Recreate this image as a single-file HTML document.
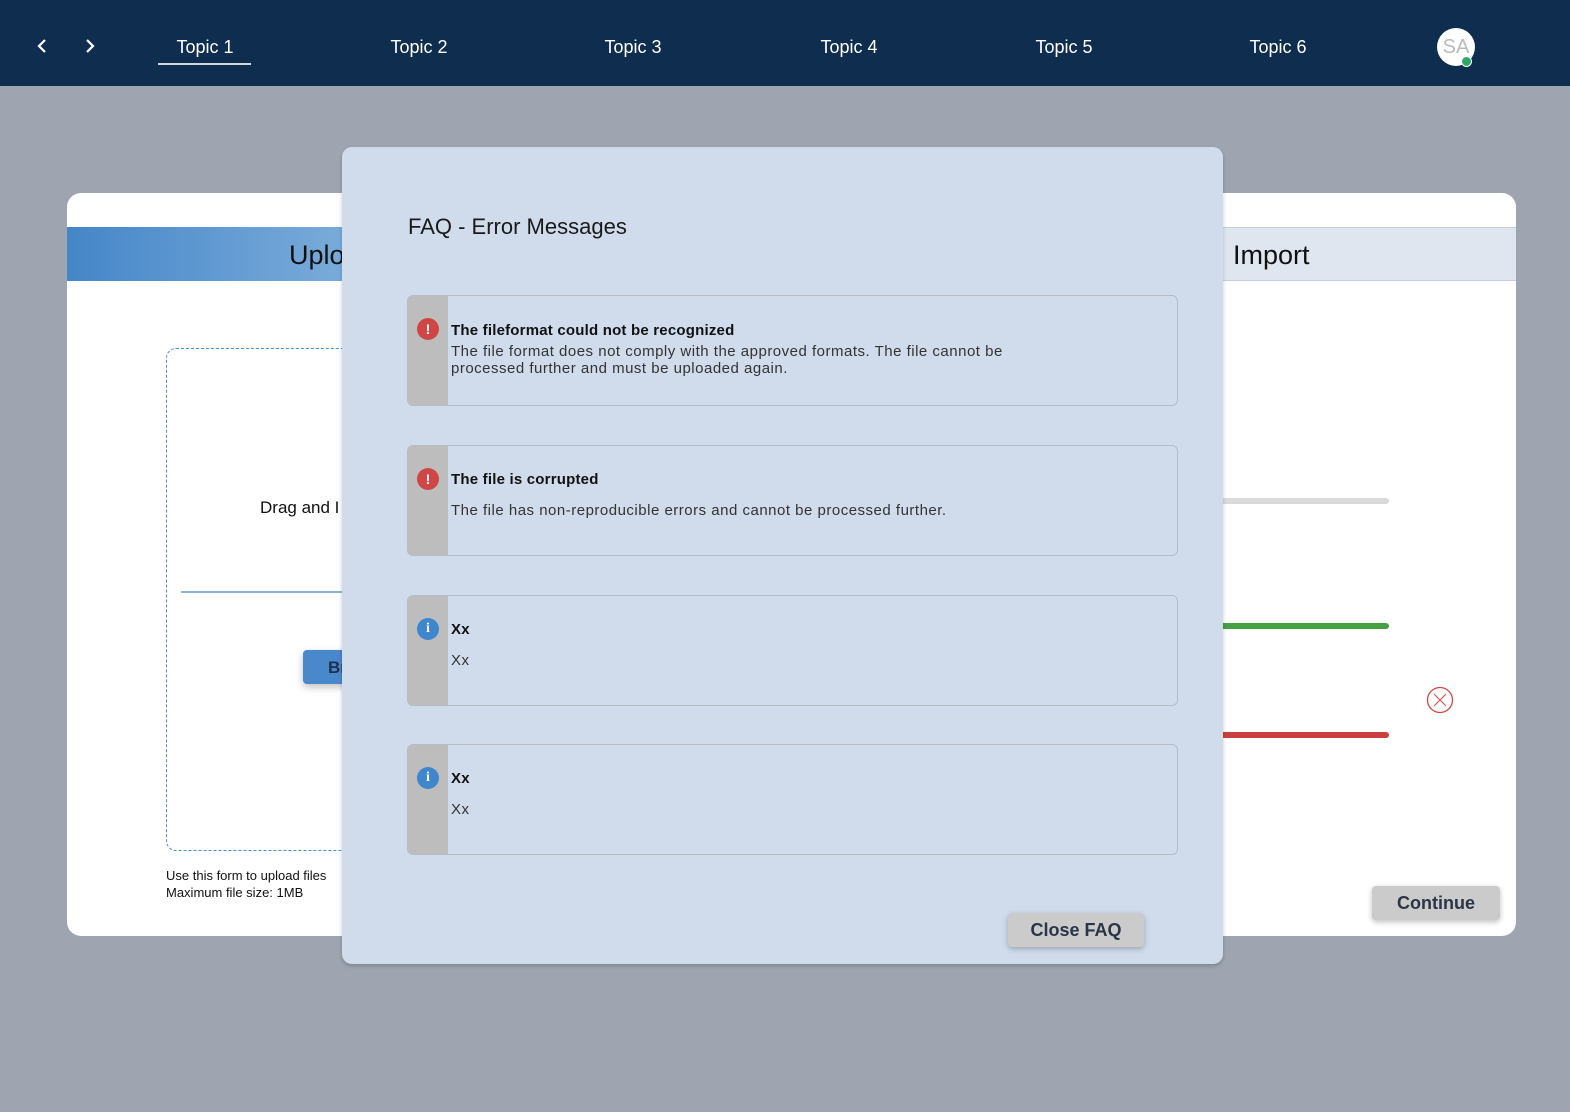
<!DOCTYPE html>
<html><head><meta charset="utf-8"><style>
*{margin:0;padding:0;box-sizing:border-box}
body{width:1570px;height:1112px;background:#9ea5b0;font-family:"Liberation Sans",sans-serif;position:relative;overflow:hidden}
.nav{position:absolute;left:0;top:0;width:1570px;height:86px;background:#0f2d4e}
.nav .t{position:absolute;top:37px;color:#fff;font-size:18px;transform:translateX(-50%)}
.ab{position:absolute}
.card{position:absolute;left:67px;top:193px;width:1449px;height:743px;background:#fff;border-radius:14px;overflow:hidden}
.modal{position:absolute;left:342px;top:147px;width:881px;height:817px;background:#d0dcec;border-radius:10px;box-shadow:0 2px 4px rgba(0,0,0,.2)}
.item{position:absolute;left:65px;width:771px;height:111px;border:1px solid #b5bcc6;border-radius:6px;overflow:hidden;background:#d0dcec}
.item .strip{position:absolute;left:0;top:0;width:40px;height:100%;background:#bdbdbd}
.item .ic{position:absolute;left:9px;width:22px;height:22px;border-radius:50%;color:#fff;font-weight:bold;font-size:14px;text-align:center;line-height:22px}
.item .h{position:absolute;left:43px;font-weight:bold;font-size:15px;color:#111;letter-spacing:0.2px}
.item .b{position:absolute;left:43px;font-size:15px;color:#333;line-height:17px;letter-spacing:0.5px}
.btn{position:absolute;background:#cbcbcb;border-radius:4px;color:#2a3548;font-weight:bold;font-size:18px;text-align:center;box-shadow:0 2px 6px rgba(0,0,0,.25)}
.bar{position:absolute;left:1150px;width:172px;height:6px;border-radius:3px}
</style></head><body>
<div class="nav">
<svg class="ab" style="left:34px;top:38px" width="16" height="16"><path d="M11 2 L5 8 L11 14" stroke="#fff" stroke-width="2.2" fill="none"/></svg>
<svg class="ab" style="left:82px;top:38px" width="16" height="16"><path d="M5 2 L11 8 L5 14" stroke="#fff" stroke-width="2.2" fill="none"/></svg>
<div class="t" style="left:205px">Topic 1</div>
<div class="ab" style="left:158px;top:63px;width:93px;height:2px;background:#d0d6de"></div>
<div class="t" style="left:419px">Topic 2</div>
<div class="t" style="left:633px">Topic 3</div>
<div class="t" style="left:849px">Topic 4</div>
<div class="t" style="left:1064px">Topic 5</div>
<div class="t" style="left:1278px">Topic 6</div>
<div class="ab" style="left:1437px;top:28px;width:38px;height:38px;border-radius:50%;background:#fff;color:#bbb;font-size:20px;text-align:center;line-height:38px">SA</div>
<div class="ab" style="left:1461px;top:56px;width:11px;height:11px;border-radius:50%;background:#2ea86a;border:1px solid #fff"></div>
</div>
<div class="card">
<div class="ab" style="left:0;top:34px;width:1449px;height:54px;background:#dfe6ef;border-top:1px solid #c8ced6;border-bottom:1px solid #c8ced6"></div>
<div class="ab" style="left:0;top:34px;width:300px;height:54px;background:linear-gradient(90deg,#4586c8,#7eaedb)"></div>
<div class="ab" style="left:222px;top:47px;font-size:27px;color:#111">Uplo</div>
<div class="ab" style="left:1166px;top:47px;font-size:27px;color:#111">Import</div>
<div class="ab" style="left:99px;top:155px;width:300px;height:503px;border:1px dashed #4a8fd8;border-radius:10px"></div>
<div class="ab" style="left:193px;top:305px;font-size:17px;color:#111">Drag and I</div>
<div class="ab" style="left:114px;top:398px;width:200px;height:2px;background:#8fb3de"></div>
<div class="ab" style="left:236px;top:457px;width:80px;height:34px;background:#4a88cc;border-radius:4px;box-shadow:0 3px 8px rgba(0,0,0,.25);color:#1d3050;font-weight:bold;font-size:17px;padding:8px 25px">Br</div>
<div class="ab" style="left:99px;top:674px;font-size:13px;color:#111;line-height:17px">Use this form to upload files<br>Maximum file size: 1MB</div>
<div class="bar" style="top:305px;background:#dadada"></div>
<div class="bar" style="top:430px;background:#46a046"></div>
<div class="bar" style="top:539px;background:#cc3f3f"></div>
<svg class="ab" style="left:1359px;top:493px" width="28" height="28"><circle cx="14" cy="14" r="12.5" stroke="#d84545" stroke-width="1.3" fill="none"/><path d="M8 8 L20 20 M20 8 L8 20" stroke="#d84545" stroke-width="1"/></svg>
<div class="btn" style="left:1305px;top:693px;width:128px;height:34px;line-height:34px">Continue</div>
</div>
<div class="modal">
<div class="ab" style="left:66px;top:67px;font-size:22px;color:#1a1a1a">FAQ - Error Messages</div>
<div class="item" style="top:148px"><div class="strip"></div><div class="ic" style="top:22px;background:#d04545">!</div><div class="h" style="top:26px">The fileformat could not be recognized</div><div class="b" style="top:47px">The file format does not comply with the approved formats. The file cannot be<br>processed further and must be uploaded again.</div></div>
<div class="item" style="top:298px"><div class="strip"></div><div class="ic" style="top:22px;background:#d04545">!</div><div class="h" style="top:25px">The file is corrupted</div><div class="b" style="top:56px">The file has non-reproducible errors and cannot be processed further.</div></div>
<div class="item" style="top:448px"><div class="strip"></div><div class="ic" style="top:22px;background:#3f86cc;font-family:'Liberation Serif',serif">i</div><div class="h" style="top:25px">Xx</div><div class="b" style="top:56px">Xx</div></div>
<div class="item" style="top:597px"><div class="strip"></div><div class="ic" style="top:22px;background:#3f86cc;font-family:'Liberation Serif',serif">i</div><div class="h" style="top:25px">Xx</div><div class="b" style="top:56px">Xx</div></div>
<div class="btn" style="left:666px;top:766px;width:136px;height:34px;line-height:34px">Close FAQ</div>
</div>
</body></html>
